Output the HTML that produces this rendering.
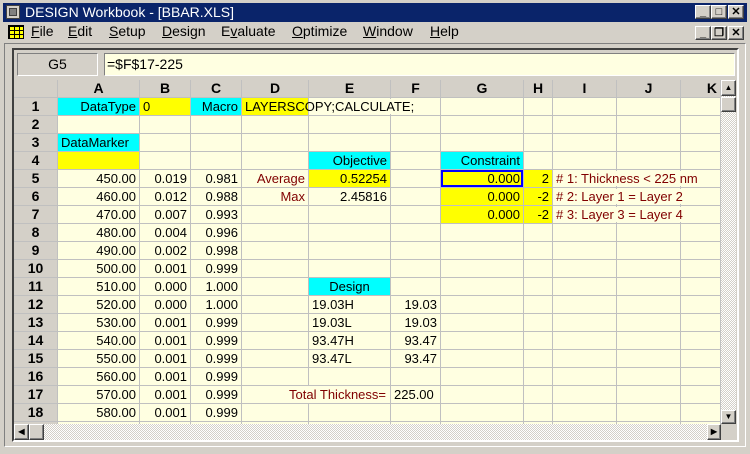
<!DOCTYPE html>
<html><head><meta charset="utf-8"><style>
*{margin:0;padding:0;box-sizing:border-box}
body{width:750px;height:454px;overflow:hidden;background:#d4d0c8;font-family:"Liberation Sans",Tahoma,sans-serif;font-size:13px;position:relative;color:#000}
.a{position:absolute}
.btn{position:absolute;width:16px;height:14px;background:#d4d0c8;border:1px solid;border-color:#fff #404040 #404040 #fff;box-shadow:inset -1px -1px #808080;font-size:11px;font-weight:bold;text-align:center;line-height:12px}
.menu span{position:absolute;top:23px}
u{text-decoration:underline}
.grid{position:absolute;left:14px;top:80px;width:707px;height:344px;overflow:hidden;background:#c0c0c0;display:grid;grid-template-columns:43px 81px 50px 50px 66px 81px 49px 82px 28px 63px 63px 39px;grid-auto-rows:17px;gap:1px}
.grid div{background:#ffffe1;white-space:nowrap;line-height:17px;padding:0 3px;overflow:visible;position:relative}
.grid .h{background:#d4d0c8;font-weight:bold;text-align:center;font-size:14px;padding:0}
.r{text-align:right}
.c{background:#00ffff!important}
.y{background:#ffff00!important}
.m{color:#800000}
.sp{z-index:2}
.sp span{background:#ffffe1;padding-right:2px}
.sel{outline:2px solid #0000ff;outline-offset:-2px;box-shadow:inset 0 1px 0 #ff0000}
</style></head><body>
<div class="a" style="left:3px;top:3px;width:744px;height:19px;background:#0a246a"></div>
<div class="a" style="left:6px;top:5px;width:14px;height:14px;background:#d4d0c8;border:1px solid #404040"><div style="margin:2px;width:8px;height:8px;border:1px solid #404040;background:#808080"></div></div>
<div class="a" style="left:25px;top:4px;color:#fff;font-size:14px">DESIGN Workbook - [BBAR.XLS]</div>
<div class="btn" style="left:695px;top:5px">_</div>
<div class="btn" style="left:711px;top:5px">□</div>
<div class="btn" style="left:728px;top:5px">✕</div>
<div class="a" style="left:8px;top:25px;width:16px;height:14px;background:#ffff00;border:1px solid #000;background-image:linear-gradient(#000 1px,transparent 1px),linear-gradient(90deg,#000 1px,transparent 1px);background-size:5px 4px"></div>
<div class="menu" style="font-size:14px">
<span style="left:31px"><u>F</u>ile</span><span style="left:68px"><u>E</u>dit</span><span style="left:109px"><u>S</u>etup</span><span style="left:162px"><u>D</u>esign</span><span style="left:221px">E<u>v</u>aluate</span><span style="left:292px"><u>O</u>ptimize</span><span style="left:363px"><u>W</u>indow</span><span style="left:430px"><u>H</u>elp</span>
</div>
<div class="btn" style="left:695px;top:26px">_</div>
<div class="btn" style="left:711px;top:26px">❐</div>
<div class="btn" style="left:728px;top:26px">✕</div>
<div class="a" style="left:4px;top:43px;width:742px;height:404px;border:1px solid;border-color:#808080 #fff #fff #808080"></div>
<div class="a" style="left:12px;top:48px;width:727px;height:394px;border:2px solid;border-color:#404040 #fff #fff #404040"></div>
<div class="a" style="left:17px;top:53px;width:81px;height:23px;border:1px solid;border-color:#808080 #fff #fff #808080;text-align:center;line-height:21px;font-size:14px">G5</div>
<div class="a" style="left:104px;top:53px;width:631px;height:23px;background:#ffffe1;border:1px solid;border-color:#808080 #fff #fff #808080;line-height:21px;padding-left:2px;font-size:14px">=$F$17-225</div>
<div class="grid">
<div class="h"></div><div class="h">A</div><div class="h">B</div><div class="h">C</div><div class="h">D</div><div class="h">E</div><div class="h">F</div><div class="h">G</div><div class="h">H</div><div class="h">I</div><div class="h">J</div><div class="h" style="text-align:right;padding-right:3px">K</div>
<div class="h">1</div><div class="c r">DataType</div><div class="y">0</div><div class="c r">Macro</div><div class="y sp">LAYERSCO<span>PY;CALCULATE;</span></div><div></div><div></div><div></div><div></div><div></div><div></div><div></div>
<div class="h">2</div><div></div><div></div><div></div><div></div><div></div><div></div><div></div><div></div><div></div><div></div><div></div>
<div class="h">3</div><div class="c">DataMarker</div><div></div><div></div><div></div><div></div><div></div><div></div><div></div><div></div><div></div><div></div>
<div class="h">4</div><div class="y"></div><div></div><div></div><div></div><div class="c r">Objective</div><div></div><div class="c r">Constraint</div><div></div><div></div><div></div><div></div>
<div class="h">5</div><div class="r">450.00</div><div class="r">0.019</div><div class="r">0.981</div><div class="r m">Average</div><div class="y r">0.52254</div><div></div><div class="y r sel">0.000</div><div class="y r">2</div><div class="m sp"><span>#&nbsp;1: Thickness &lt; 225 nm</span></div><div></div><div></div>
<div class="h">6</div><div class="r">460.00</div><div class="r">0.012</div><div class="r">0.988</div><div class="r m">Max</div><div class="r">2.45816</div><div></div><div class="y r">0.000</div><div class="y r">-2</div><div class="m sp"><span>#&nbsp;2: Layer 1 = Layer 2</span></div><div></div><div></div>
<div class="h">7</div><div class="r">470.00</div><div class="r">0.007</div><div class="r">0.993</div><div></div><div></div><div></div><div class="y r">0.000</div><div class="y r">-2</div><div class="m sp"><span>#&nbsp;3: Layer 3 = Layer 4</span></div><div></div><div></div>
<div class="h">8</div><div class="r">480.00</div><div class="r">0.004</div><div class="r">0.996</div><div></div><div></div><div></div><div></div><div></div><div></div><div></div><div></div>
<div class="h">9</div><div class="r">490.00</div><div class="r">0.002</div><div class="r">0.998</div><div></div><div></div><div></div><div></div><div></div><div></div><div></div><div></div>
<div class="h">10</div><div class="r">500.00</div><div class="r">0.001</div><div class="r">0.999</div><div></div><div></div><div></div><div></div><div></div><div></div><div></div><div></div>
<div class="h">11</div><div class="r">510.00</div><div class="r">0.000</div><div class="r">1.000</div><div></div><div class="c" style="text-align:center">Design</div><div></div><div></div><div></div><div></div><div></div><div></div>
<div class="h">12</div><div class="r">520.00</div><div class="r">0.000</div><div class="r">1.000</div><div></div><div>19.03H</div><div class="r">19.03</div><div></div><div></div><div></div><div></div><div></div>
<div class="h">13</div><div class="r">530.00</div><div class="r">0.001</div><div class="r">0.999</div><div></div><div>19.03L</div><div class="r">19.03</div><div></div><div></div><div></div><div></div><div></div>
<div class="h">14</div><div class="r">540.00</div><div class="r">0.001</div><div class="r">0.999</div><div></div><div>93.47H</div><div class="r">93.47</div><div></div><div></div><div></div><div></div><div></div>
<div class="h">15</div><div class="r">550.00</div><div class="r">0.001</div><div class="r">0.999</div><div></div><div>93.47L</div><div class="r">93.47</div><div></div><div></div><div></div><div></div><div></div>
<div class="h">16</div><div class="r">560.00</div><div class="r">0.001</div><div class="r">0.999</div><div></div><div></div><div></div><div></div><div></div><div></div><div></div><div></div>
<div class="h">17</div><div class="r">570.00</div><div class="r">0.001</div><div class="r">0.999</div><div></div><div class="m sp"><span style="position:absolute;right:2px;top:0;padding-left:3px">Total Thickness=</span></div><div>225.00</div><div></div><div></div><div></div><div></div><div></div>
<div class="h">18</div><div class="r">580.00</div><div class="r">0.001</div><div class="r">0.999</div><div></div><div></div><div></div><div></div><div></div><div></div><div></div><div></div>
<div class="h">19</div><div></div><div></div><div></div><div></div><div></div><div></div><div></div><div></div><div></div><div></div><div></div>
</div>
<div class="a" style="left:721px;top:80px;width:15px;height:344px;background:repeating-conic-gradient(#fff 0 25%,#d4d0c8 0 50%) 0 0/2px 2px"></div>
<div class="btn" style="left:721px;top:80px;width:15px;height:16px;font-size:8px;line-height:14px">▲</div>
<div class="btn" style="left:721px;top:97px;width:15px;height:15px"></div>
<div class="btn" style="left:721px;top:410px;width:15px;height:14px;font-size:8px">▼</div>
<div class="a" style="left:14px;top:424px;width:707px;height:16px;background:repeating-conic-gradient(#fff 0 25%,#d4d0c8 0 50%) 0 0/2px 2px"></div>
<div class="btn" style="left:14px;top:424px;width:15px;height:16px;font-size:8px;line-height:14px">◀</div>
<div class="btn" style="left:29px;top:424px;width:15px;height:16px"></div>
<div class="btn" style="left:707px;top:424px;width:14px;height:16px;font-size:8px;line-height:14px">▶</div>
<div class="a" style="left:721px;top:424px;width:15px;height:16px;background:#d4d0c8"></div>
</body></html>
